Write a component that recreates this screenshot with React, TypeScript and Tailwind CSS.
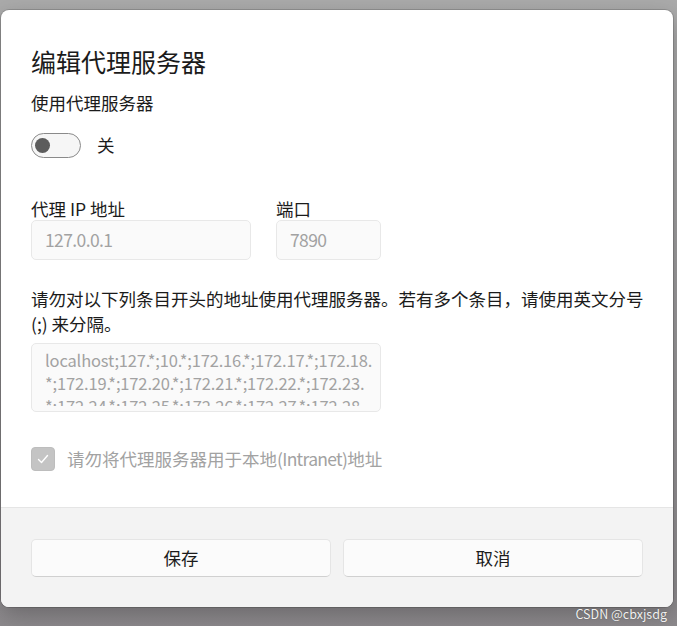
import React from "react";

const FONT = '"Noto Sans CJK SC","Segoe UI","Noto Sans",sans-serif';

export default function App() {
  return (
    <div
      className="relative w-[677px] h-[626px] overflow-hidden bg-gradient-to-b from-[#ababab] to-[#8d8a8d] pt-[10px] pl-[1px]"
      style={{ fontFamily: FONT }}
    >
      <div className="w-[672px] h-[597px] flex flex-col rounded-[8px] overflow-hidden bg-white shadow-[0_0_0_1px_rgba(0,0,0,0.15),0_8px_24px_rgba(0,0,0,0.25)]">
        {/* Body */}
        <div className="flex-1 flex flex-col px-[30px] pt-[30px]">
          <div className="h-[42px] flex items-center text-[25px] text-[#1b1b1b] leading-none">
            编辑代理服务器
          </div>
          <div className="mt-[9px] h-[24px] flex items-center text-[17.5px] text-[#1b1b1b]">
            使用代理服务器
          </div>
          <div className="mt-[17px] flex items-center gap-[16px]">
            <div className="w-[50px] h-[25px] rounded-full border border-[#8a8a8a] bg-[#f6f6f6] flex items-center pl-[3px]">
              <div className="w-[15px] h-[15px] rounded-full bg-[#5c5c5c]" />
            </div>
            <span className="text-[17.5px] text-[#1b1b1b]">关</span>
          </div>

          <div className="mt-[40px] flex gap-[25px]">
            <div className="flex flex-col">
              <div className="h-[22px] flex items-center text-[17.5px] text-[#1b1b1b]">代理 IP 地址</div>
              <div className="w-[220px] h-[40px] rounded-[5px] border border-[#e8e8e8] bg-[#fafafa] flex items-center pl-[13px] text-[17.5px] tracking-[-0.6px] text-[#a2a2a2]">
                127.0.0.1
              </div>
            </div>
            <div className="flex flex-col">
              <div className="h-[22px] flex items-center text-[17.5px] text-[#1b1b1b]">端口</div>
              <div className="w-[105px] h-[40px] rounded-[5px] border border-[#e8e8e8] bg-[#fafafa] flex items-center pl-[13px] text-[17.5px] tracking-[-0.6px] text-[#a2a2a2]">
                7890
              </div>
            </div>
          </div>

          <div className="mt-[26px] text-[17.5px] leading-[25px] text-[#1b1b1b]">
            <div className="whitespace-nowrap">请勿对以下列条目开头的地址使用代理服务器。若有多个条目，请使用英文分号</div>
            <div className="whitespace-nowrap">(;) 来分隔。</div>
          </div>

          <div className="mt-[7px] w-[350px] h-[69px] rounded-[5px] border border-[#e8e8e8] bg-[#fafafa] pl-[13px] pt-[5px] text-[16.5px] tracking-[-0.15px] leading-[23px] text-[#a2a2a2]">
            <div className="h-[57px] overflow-hidden">
              <div className="whitespace-nowrap">localhost;127.*;10.*;172.16.*;172.17.*;172.18.</div>
              <div className="whitespace-nowrap">*;172.19.*;172.20.*;172.21.*;172.22.*;172.23.</div>
              <div className="whitespace-nowrap">*;172.24.*;172.25.*;172.26.*;172.27.*;172.28.</div>
            </div>
          </div>

          <div className="mt-[34px] flex items-center gap-[12px]">
            <div className="w-[24px] h-[24px] rounded-[4px] bg-[#c4c4c4] border border-[#bdbdbd] flex items-center justify-center">
              <svg width="14" height="14" viewBox="0 0 14 14" fill="none">
                <path d="M2.5 7.5 L5.5 10.5 L11.5 3.5" stroke="white" strokeWidth="1.4" strokeLinecap="round" strokeLinejoin="round" />
              </svg>
            </div>
            <span className="text-[17.5px] text-[#a2a2a2]">
              请勿将代理服务器用于本地<span className="tracking-[-0.7px]">(Intranet)</span>地址
            </span>
          </div>
        </div>

        {/* Footer */}
        <div className="h-[100px] border-t border-[#e5e5e5] bg-[#f3f3f3] px-[30px] pt-[31px]">
          <div className="grid grid-cols-2 gap-[12px]">
            <button className="h-[38px] rounded-[5px] border border-[#e5e5e5] border-b-[#d0d0d0] bg-[#fbfbfb] text-[17.5px] text-[#1b1b1b]" style={{ fontFamily: FONT }}>
              保存
            </button>
            <button className="h-[38px] rounded-[5px] border border-[#e5e5e5] border-b-[#d0d0d0] bg-[#fbfbfb] text-[17.5px] text-[#1b1b1b]" style={{ fontFamily: FONT }}>
              取消
            </button>
          </div>
        </div>
      </div>

      <div className="absolute right-[10px] bottom-[6px] text-[12.5px] leading-none text-[#f2f2f2] [text-shadow:0_0_1px_rgba(0,0,0,0.4)]">
        CSDN @cbxjsdg
      </div>
    </div>
  );
}
